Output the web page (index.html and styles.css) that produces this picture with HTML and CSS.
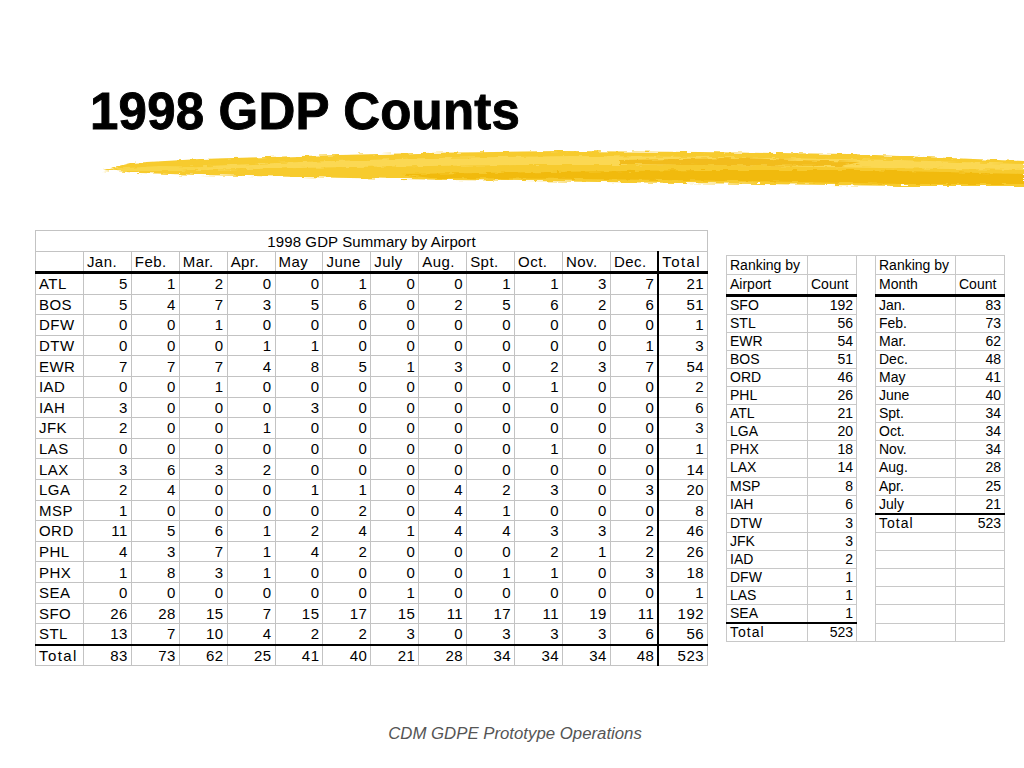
FILE: index.html
```html
<!DOCTYPE html>
<html>
<head>
<meta charset="utf-8">
<link rel="stylesheet" href="styles.css">
</head>
<body>
<h1 class="title">1998 GDP Counts</h1>
<div class="brush">
  <svg width="924" height="44" viewBox="0 0 924 44">
    <defs>
      <filter id="rough" x="-2%" y="-30%" width="104%" height="160%">
        <feTurbulence type="fractalNoise" baseFrequency="0.09 0.5" numOctaves="2" seed="3" result="n"/>
        <feDisplacementMap in="SourceGraphic" in2="n" scale="5" xChannelSelector="R" yChannelSelector="G"/>
      </filter>
    </defs>
    <g filter="url(#rough)">
      <path d="M3 22 L30 15 L100 11 L200 8 L320 5 L460 3 L600 4 L750 6 L850 10 L924 13 L924 38 L800 38 L660 36 L500 34 L350 32 L200 29 L100 27 L40 25 Z" fill="#f7cb2e"/>
      <path d="M60 20 L200 14 L330 10 L470 8 L620 9 L800 12 L924 16 L924 22 L780 20 L600 17 L420 17 L250 19 L100 22 Z" fill="#fbdb5c" opacity="0.8"/>
      <path d="M300 26 L450 24 L600 22 L760 22 L924 26 L924 36 L800 36 L640 33 L480 31 L330 30 Z" fill="#f0b70c" opacity="0.85"/>
      <path d="M520 12 L640 10 L760 14 L740 18 L600 17 L520 16 Z" fill="#eeb106" opacity="0.7"/>
      <path d="M10 21 L60 18 L120 19 L80 23 L20 23 Z" fill="#f9d64a"/>
    </g>
  </svg>
</div>
<div class="content">
  <table class="main">
    <tr class="r-title"><td colspan="14" class="caption">1998 GDP Summary by Airport</td></tr>
    <tr class="r-head">
      <td></td><td>Jan.</td><td>Feb.</td><td>Mar.</td><td>Apr.</td><td>May</td><td>June</td><td>July</td><td>Aug.</td><td>Spt.</td><td>Oct.</td><td>Nov.</td><td>Dec.</td><td class="tcol wide">Total</td>
    </tr>
    <tr><td>ATL</td><td>5</td><td>1</td><td>2</td><td>0</td><td>0</td><td>1</td><td>0</td><td>0</td><td>1</td><td>1</td><td>3</td><td>7</td><td class="tcol">21</td></tr>
    <tr><td>BOS</td><td>5</td><td>4</td><td>7</td><td>3</td><td>5</td><td>6</td><td>0</td><td>2</td><td>5</td><td>6</td><td>2</td><td>6</td><td class="tcol">51</td></tr>
    <tr><td>DFW</td><td>0</td><td>0</td><td>1</td><td>0</td><td>0</td><td>0</td><td>0</td><td>0</td><td>0</td><td>0</td><td>0</td><td>0</td><td class="tcol">1</td></tr>
    <tr><td>DTW</td><td>0</td><td>0</td><td>0</td><td>1</td><td>1</td><td>0</td><td>0</td><td>0</td><td>0</td><td>0</td><td>0</td><td>1</td><td class="tcol">3</td></tr>
    <tr><td>EWR</td><td>7</td><td>7</td><td>7</td><td>4</td><td>8</td><td>5</td><td>1</td><td>3</td><td>0</td><td>2</td><td>3</td><td>7</td><td class="tcol">54</td></tr>
    <tr><td>IAD</td><td>0</td><td>0</td><td>1</td><td>0</td><td>0</td><td>0</td><td>0</td><td>0</td><td>0</td><td>1</td><td>0</td><td>0</td><td class="tcol">2</td></tr>
    <tr><td>IAH</td><td>3</td><td>0</td><td>0</td><td>0</td><td>3</td><td>0</td><td>0</td><td>0</td><td>0</td><td>0</td><td>0</td><td>0</td><td class="tcol">6</td></tr>
    <tr><td>JFK</td><td>2</td><td>0</td><td>0</td><td>1</td><td>0</td><td>0</td><td>0</td><td>0</td><td>0</td><td>0</td><td>0</td><td>0</td><td class="tcol">3</td></tr>
    <tr><td>LAS</td><td>0</td><td>0</td><td>0</td><td>0</td><td>0</td><td>0</td><td>0</td><td>0</td><td>0</td><td>1</td><td>0</td><td>0</td><td class="tcol">1</td></tr>
    <tr><td>LAX</td><td>3</td><td>6</td><td>3</td><td>2</td><td>0</td><td>0</td><td>0</td><td>0</td><td>0</td><td>0</td><td>0</td><td>0</td><td class="tcol">14</td></tr>
    <tr><td>LGA</td><td>2</td><td>4</td><td>0</td><td>0</td><td>1</td><td>1</td><td>0</td><td>4</td><td>2</td><td>3</td><td>0</td><td>3</td><td class="tcol">20</td></tr>
    <tr><td>MSP</td><td>1</td><td>0</td><td>0</td><td>0</td><td>0</td><td>2</td><td>0</td><td>4</td><td>1</td><td>0</td><td>0</td><td>0</td><td class="tcol">8</td></tr>
    <tr><td>ORD</td><td>11</td><td>5</td><td>6</td><td>1</td><td>2</td><td>4</td><td>1</td><td>4</td><td>4</td><td>3</td><td>3</td><td>2</td><td class="tcol">46</td></tr>
    <tr><td>PHL</td><td>4</td><td>3</td><td>7</td><td>1</td><td>4</td><td>2</td><td>0</td><td>0</td><td>0</td><td>2</td><td>1</td><td>2</td><td class="tcol">26</td></tr>
    <tr><td>PHX</td><td>1</td><td>8</td><td>3</td><td>1</td><td>0</td><td>0</td><td>0</td><td>0</td><td>1</td><td>1</td><td>0</td><td>3</td><td class="tcol">18</td></tr>
    <tr><td>SEA</td><td>0</td><td>0</td><td>0</td><td>0</td><td>0</td><td>0</td><td>1</td><td>0</td><td>0</td><td>0</td><td>0</td><td>0</td><td class="tcol">1</td></tr>
    <tr><td>SFO</td><td>26</td><td>28</td><td>15</td><td>7</td><td>15</td><td>17</td><td>15</td><td>11</td><td>17</td><td>11</td><td>19</td><td>11</td><td class="tcol">192</td></tr>
    <tr><td>STL</td><td>13</td><td>7</td><td>10</td><td>4</td><td>2</td><td>2</td><td>3</td><td>0</td><td>3</td><td>3</td><td>3</td><td>6</td><td class="tcol">56</td></tr>
    <tr class="r-total"><td class="wide">Total</td><td>83</td><td>73</td><td>62</td><td>25</td><td>41</td><td>40</td><td>21</td><td>28</td><td>34</td><td>34</td><td>34</td><td>48</td><td class="tcol">523</td></tr>
  </table>

  <table class="rank">
    <tr class="r-top"><td>Ranking by</td><td></td><td class="gap" rowspan="21"></td><td>Ranking by</td><td></td></tr>
    <tr class="r-head"><td>Airport</td><td>Count</td><td>Month</td><td>Count</td></tr>
    <tr><td>SFO</td><td class="n">192</td><td>Jan.</td><td class="n">83</td></tr>
    <tr><td>STL</td><td class="n">56</td><td>Feb.</td><td class="n">73</td></tr>
    <tr><td>EWR</td><td class="n">54</td><td>Mar.</td><td class="n">62</td></tr>
    <tr><td>BOS</td><td class="n">51</td><td>Dec.</td><td class="n">48</td></tr>
    <tr><td>ORD</td><td class="n">46</td><td>May</td><td class="n">41</td></tr>
    <tr><td>PHL</td><td class="n">26</td><td>June</td><td class="n">40</td></tr>
    <tr><td>ATL</td><td class="n">21</td><td>Spt.</td><td class="n">34</td></tr>
    <tr><td>LGA</td><td class="n">20</td><td>Oct.</td><td class="n">34</td></tr>
    <tr><td>PHX</td><td class="n">18</td><td>Nov.</td><td class="n">34</td></tr>
    <tr><td>LAX</td><td class="n">14</td><td>Aug.</td><td class="n">28</td></tr>
    <tr><td>MSP</td><td class="n">8</td><td>Apr.</td><td class="n">25</td></tr>
    <tr><td>IAH</td><td class="n">6</td><td class="below">July</td><td class="n below">21</td></tr>
    <tr><td>DTW</td><td class="n">3</td><td class="wide">Total</td><td class="n">523</td></tr>
    <tr><td>JFK</td><td class="n">3</td><td></td><td></td></tr>
    <tr><td>IAD</td><td class="n">2</td><td></td><td></td></tr>
    <tr><td>DFW</td><td class="n">1</td><td></td><td></td></tr>
    <tr><td>LAS</td><td class="n">1</td><td></td><td></td></tr>
    <tr><td class="below">SEA</td><td class="n below">1</td><td></td><td></td></tr>
    <tr><td class="wide">Total</td><td class="n">523</td><td></td><td></td></tr>
  </table>
</div>
<p class="footer">CDM GDPE Prototype Operations</p>
</body>
</html>
```
FILE: styles.css
```css
html, body {
  margin: 0;
  padding: 0;
  background: #ffffff;
}
body {
  width: 1024px;
  height: 768px;
  overflow: hidden;
  font-family: "Liberation Sans", Arial, sans-serif;
  color: #000;
}
.title {
  margin: 82px 0 0 90px;
  font-size: 51px;
  line-height: 60px;
  font-weight: bold;
  letter-spacing: 0.2px;
  -webkit-text-stroke: 0.9px #000;
}
.brush {
  margin: 6px 0 0 100px;
  height: 44px;
}
.brush svg {
  display: block;
}
.content {
  display: flex;
  align-items: flex-start;
  margin-top: 38px;
  padding-left: 35px;
  gap: 18px;
}
.main {
  border-collapse: collapse;
  table-layout: fixed;
  width: 673px;
  font-size: 15px;
  letter-spacing: 0.45px;
}
.main td {
  width: 48px;
  height: 19.6px;
  padding: 0 3px;
  border: 1px solid #c3c3c3;
  text-align: right;
  white-space: nowrap;
  line-height: 17px;
  vertical-align: middle;
}
.main tr td:first-child {
  text-align: left;
}
.main .r-title td {
  height: 20px;
}
.main .caption {
  text-align: center !important;
  letter-spacing: 0.1px;
}
.main .r-head td {
  text-align: left;
  height: 19px;
  border-bottom: 3px solid #000;
}
.main .tcol {
  border-left: 2px solid #000;
}
.main .r-total td {
  border-top: 2px solid #000;
}
.wide {
  letter-spacing: 1.4px;
}
.rank {
  margin-top: 25px;
  border-collapse: collapse;
  table-layout: fixed;
  font-size: 14px;
}
.rank td {
  height: 17.1px;
  padding: 0 3px;
  border: 1px solid #c8c8c8;
  line-height: 15px;
  white-space: nowrap;
  text-align: left;
}
.rank .r-top td,
.rank .r-head td {
  height: 18.3px;
}
.rank td:nth-child(1) { width: 74px; }
.rank tr:first-child td:nth-child(2) { width: 42px; }
.rank tr:first-child td:nth-child(4) { width: 73px; }
.rank tr:first-child td:nth-child(5) { width: 42px; }
.rank .gap {
  width: 18px;
  padding: 0;
}
.rank .n {
  text-align: right;
}
.rank .r-head td {
  border-bottom: 3px solid #000;
}
.rank .below {
  border-bottom: 2px solid #000;
}
.rank .wide {
  letter-spacing: 1px;
}
.footer {
  margin: 58px 0 0 0;
  width: 1030px;
  text-align: center;
  font-size: 16.8px;
  line-height: 20px;
  font-style: italic;
  color: #555;
}
```
